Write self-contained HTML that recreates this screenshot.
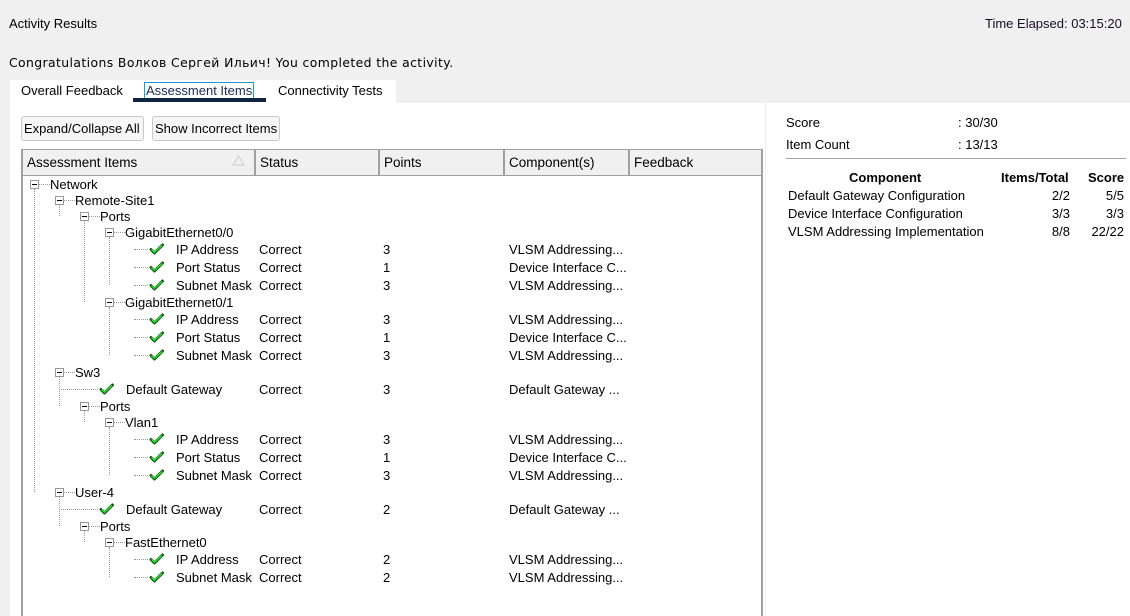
<!DOCTYPE html>
<html><head><meta charset="utf-8"><style>
*{margin:0;padding:0;box-sizing:border-box}
body{width:1130px;height:616px;background:#f0f0f0;position:relative;overflow:hidden;font-family:"Liberation Sans",Arial,sans-serif;font-size:13px;color:#000}
.a{position:absolute;white-space:nowrap;line-height:16px}
.bx{position:absolute;width:9px;height:9px;border:1px solid #999;background:#fff}
.bx:after{content:"";position:absolute;left:1px;top:3px;width:5px;height:1px;background:#000}
.h{position:absolute;height:1px;border-top:1px dotted #999}
.v{position:absolute;width:1px;border-left:1px dotted #999}
.ck{position:absolute;width:15px;height:12px}
.btn{position:absolute;top:116px;height:25px;border:1px solid #c8c8c8;border-radius:3px;background:#f6f6f6;line-height:23px;padding:0 2px;font-size:13px;white-space:nowrap;overflow:hidden}
.hd{position:absolute;top:150px;height:26px;background:#f0f0f0;border-right:2px solid #a0a0a0;border-bottom:1px solid #a0a0a0;line-height:26px;padding-left:4px;font-size:13.5px}
</style></head><body>
<div class="a" style="left:9px;top:16px">Activity Results</div>
<div class="a" style="left:985px;top:16px;color:#1a0a2a">Time Elapsed: 03:15:20</div>
<div class="a" style="left:9px;top:55px;font-family:'DejaVu Sans',sans-serif;font-size:12.4px;letter-spacing:0.4px">Congratulations Волков Сергей Ильич! You completed the activity.</div>
<div style="position:absolute;left:10px;top:80px;width:386px;height:24px;background:#fff"></div>
<div class="a" style="left:21px;top:83px">Overall Feedback</div>
<div class="a" style="left:144px;top:82px;border:1px solid #1e9ad6;padding:0 1px;line-height:15px;color:#1a2a5a">Assessment Items</div>
<div style="position:absolute;left:133px;top:98px;width:133px;height:4px;background:#0e2340"></div>
<div class="a" style="left:278px;top:83px">Connectivity Tests</div>
<div style="position:absolute;left:10px;top:103px;width:1120px;height:513px;background:#fff"></div>
<div style="position:absolute;left:765px;top:103px;width:1px;height:513px;background:#eee"></div>
<div class="btn" style="left:21px;width:123px">Expand/Collapse All</div>
<div class="btn" style="left:152px;width:128px">Show Incorrect Items</div>
<div style="position:absolute;left:21px;top:149px;width:742px;height:467px;border:2px solid #a0a0a0;border-bottom:none"></div>
<div class="hd" style="left:23px;width:233px">Assessment Items<svg style="position:absolute;left:209px;top:5px" width="13" height="11"><path d="M6.5 1L12 10H1Z" fill="none" stroke="#ccc"/></svg></div>
<div class="hd" style="left:256px;width:124px">Status</div>
<div class="hd" style="left:380px;width:125px">Points</div>
<div class="hd" style="left:505px;width:125px">Component(s)</div>
<div class="hd" style="left:630px;width:131px;border-right:none">Feedback</div>

<svg width="0" height="0" style="position:absolute"><defs><symbol id="c" viewBox="0 0 15 12"><path d="M2 6.5L5.5 10L13.5 2" fill="none" stroke="#1a5a1a" stroke-width="3" stroke-linejoin="round" stroke-linecap="round"/><path d="M2.5 6.5L5.5 9.3L13 2.5" fill="none" stroke="#2ee82e" stroke-width="1.3"/></symbol></defs></svg>

<div class="v" style="left:34px;top:189px;height:303px"></div>
<div class="v" style="left:59px;top:205px;height:11px"></div>
<div class="v" style="left:59px;top:377px;height:29px"></div>
<div class="v" style="left:59px;top:497px;height:29px"></div>
<div class="v" style="left:84px;top:221px;height:81px"></div>
<div class="v" style="left:84px;top:411px;height:11px"></div>
<div class="v" style="left:84px;top:531px;height:11px"></div>
<div class="v" style="left:109px;top:237px;height:48px"></div>
<div class="v" style="left:109px;top:307px;height:48px"></div>
<div class="v" style="left:109px;top:427px;height:48px"></div>
<div class="v" style="left:109px;top:547px;height:30px"></div>

<div id="tree"></div>
<script>
var rows=[
[184,0,'Network'],[200,1,'Remote-Site1'],[216,2,'Ports'],[232,3,'GigabitEthernet0/0'],
[249,4,'IP Address','3','VLSM Addressing...'],[267,4,'Port Status','1','Device Interface C...'],[285,4,'Subnet Mask','3','VLSM Addressing...'],
[302,3,'GigabitEthernet0/1'],
[319,4,'IP Address','3','VLSM Addressing...'],[337,4,'Port Status','1','Device Interface C...'],[355,4,'Subnet Mask','3','VLSM Addressing...'],
[372,1,'Sw3'],[389,2,'Default Gateway','3','Default Gateway ...',1],[406,2,'Ports'],[422,3,'Vlan1'],
[439,4,'IP Address','3','VLSM Addressing...'],[457,4,'Port Status','1','Device Interface C...'],[475,4,'Subnet Mask','3','VLSM Addressing...'],
[492,1,'User-4'],[509,2,'Default Gateway','2','Default Gateway ...',1],[526,2,'Ports'],[542,3,'FastEthernet0'],
[559,4,'IP Address','2','VLSM Addressing...'],[577,4,'Subnet Mask','2','VLSM Addressing...']];
var h='';
rows.forEach(function(r){var y=r[0],l=r[1],ty=y-7;
 if(r.length>3){var lv=(l==4)?4:2;var vx=(lv==4)?134:59;var cx=(lv==4)?149:99;var tx=(lv==4)?176:126;
  h+='<div class="h" style="left:'+vx+'px;top:'+y+'px;width:'+(cx-vx-1)+'px"></div>';
  h+='<svg class="ck" style="left:'+cx+'px;top:'+(y-6)+'px"><use href="#c"/></svg>';
  h+='<div class="a" style="left:'+tx+'px;top:'+ty+'px">'+r[2]+'</div>';
  h+='<div class="a" style="left:259px;top:'+ty+'px">Correct</div>';
  h+='<div class="a" style="left:383px;top:'+ty+'px">'+r[3]+'</div>';
  h+='<div class="a" style="left:509px;top:'+ty+'px">'+r[4]+'</div>';
 } else {var bx=34+25*l;
  h+='<div class="bx" style="left:'+(bx-4)+'px;top:'+(y-4)+'px"></div>';
  h+='<div class="h" style="left:'+(bx+5)+'px;top:'+y+'px;width:'+(11)+'px"></div>';
  h+='<div class="a" style="left:'+(bx+16)+'px;top:'+ty+'px">'+r[2]+'</div>';
 }});
document.getElementById('tree').innerHTML=h;
</script>

<div class="a" style="left:786px;top:115px">Score</div>
<div class="a" style="left:958px;top:115px">: 30/30</div>
<div class="a" style="left:786px;top:137px">Item Count</div>
<div class="a" style="left:958px;top:137px">: 13/13</div>
<div style="position:absolute;left:786px;top:158px;width:340px;height:1px;background:#a0a0a0"></div>
<div class="a" style="left:849px;top:170px;font-weight:bold">Component</div>
<div class="a" style="left:1001px;top:170px;font-weight:bold">Items/Total</div>
<div class="a" style="left:1088px;top:170px;font-weight:bold">Score</div>
<div class="a" style="left:788px;top:188px">Default Gateway Configuration</div>
<div class="a" style="left:788px;top:206px">Device Interface Configuration</div>
<div class="a" style="left:788px;top:224px">VLSM Addressing Implementation</div>
<div class="a" style="left:1000px;top:188px;width:70px;text-align:right">2/2</div>
<div class="a" style="left:1000px;top:206px;width:70px;text-align:right">3/3</div>
<div class="a" style="left:1000px;top:224px;width:70px;text-align:right">8/8</div>
<div class="a" style="left:1070px;top:188px;width:54px;text-align:right">5/5</div>
<div class="a" style="left:1070px;top:206px;width:54px;text-align:right">3/3</div>
<div class="a" style="left:1070px;top:224px;width:54px;text-align:right">22/22</div>
</body></html>
